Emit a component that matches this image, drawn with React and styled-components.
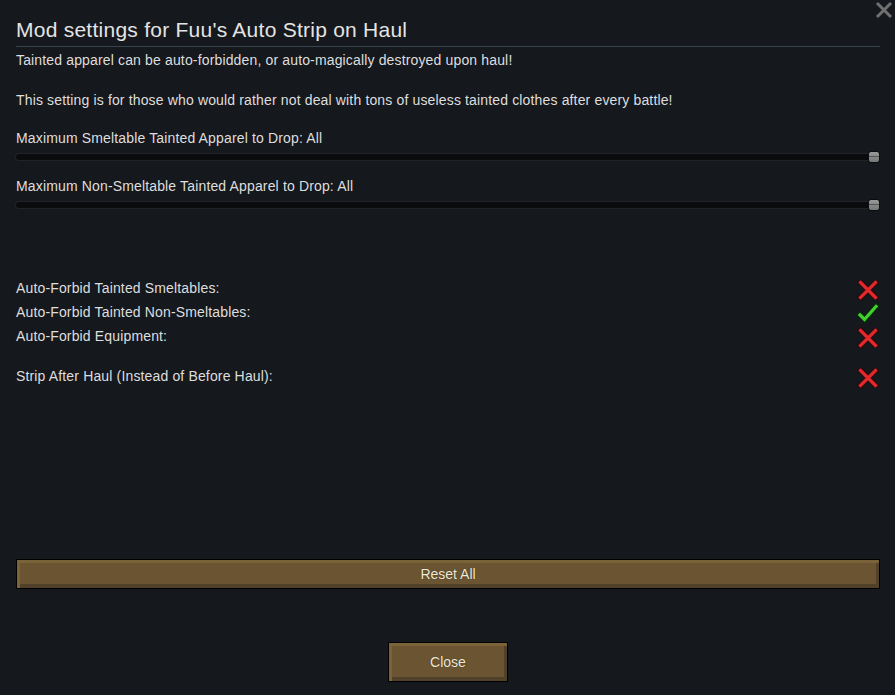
import React from 'react'
import styled, { createGlobalStyle } from 'styled-components'

const GlobalStyle = createGlobalStyle`
  html, body {
    margin:0;
    padding:0;
    background:#15181d;
  }
  body{
    font-family:"Liberation Sans", Arial, sans-serif;
    color:#dedede;
  }
`

const Window = styled.div`
  position:relative;
  width:895px;
  height:695px;
  box-sizing:border-box;
  padding:0 15px 13px 16px;
  display:flex;
  flex-direction:column;
  background:#15181d;
  overflow:hidden;
`

const CloseX = styled.svg`
  position:absolute;
  top:1px;
  right:2px;
  width:18px;
  height:18px;
`

const Title = styled.h1`
  margin:18px 0 0;
  padding-bottom:4px;
  font-size:21px;
  letter-spacing:0.25px;
  line-height:24px;
  font-weight:normal;
  color:#e4e4e4;
  border-bottom:1px solid #38454d;
`

const Text = styled.p`
  margin:${p => p.$top || 0}px 0 0;
  font-size:14px;
  letter-spacing:0.15px;
  line-height:20px;
  min-height:20px;
`

const SliderBlock = styled.div`
  margin-top:${p => p.$top}px;
  display:flex;
  flex-direction:column;
  gap:3px;
`

const Track = styled.div`
  position:relative;
  height:12px;
  display:flex;
  align-items:center;

  &::before{
    content:'';
    flex:1;
    height:6px;
    margin-right:4px;
    border-radius:3px;
    background:#0a0b0d;
    box-shadow:0 0 0 1px #202328;
  }
`

const Handle = styled.div`
  position:absolute;
  right:0;
  top:0;
  width:10px;
  height:10px;
  border:1px solid #0b0c0e;
  border-radius:3px;
  background:linear-gradient(#9a9a9a 0, #8a8a8a 40%, #555 40%, #555 55%, #858585 55%, #7a7a7a 100%);
`

const ToggleList = styled.div`
  margin-top:67px;
  display:flex;
  flex-direction:column;
`

const ToggleRow = styled.div`
  height:24px;
  margin-top:${p => p.$gap || 0}px;
  display:flex;
  justify-content:space-between;
  align-items:flex-start;
  font-size:14px;
  letter-spacing:0.15px;
  line-height:20px;
`

const Icon = styled.svg`
  width:24px;
  height:24px;
`

const Button = styled.button`
  box-sizing:border-box;
  border:1px solid #000;
  background:#6a5432;
  box-shadow:
    inset 3px 3px 0 #7b6339,
    inset -3px -4px 0 #52412a;
  color:#f1e9d6;
  font-family:"Liberation Sans", Arial, sans-serif;
  font-size:14px;
  text-shadow:0 0 1px rgba(0,0,0,.6);
  padding:0;
  cursor:pointer;
`

const ResetButton = styled(Button)`
  margin-top:auto;
  width:100%;
  height:30px;
`

const CloseButton = styled(Button)`
  margin-top:53px;
  align-self:center;
  width:120px;
  height:40px;
`

function Cross() {
  return (
    <Icon viewBox="0 0 24 24">
      <g strokeLinecap="square">
        <path d="M4.5 4.5 L19.5 19.5 M19.5 4.5 L4.5 19.5" stroke="#2a0c0c" strokeWidth="5.4" />
        <path d="M4.5 4.5 L19.5 19.5 M19.5 4.5 L4.5 19.5" stroke="#e3292b" strokeWidth="3.2" />
      </g>
    </Icon>
  )
}

function Check() {
  return (
    <Icon viewBox="0 0 24 24">
      <g fill="none" strokeLinecap="square" strokeLinejoin="miter">
        <path d="M4 13 L8.5 17.5 L20 4.5" stroke="#0c2a0a" strokeWidth="5.4" />
        <path d="M4 13 L8.5 17.5 L20 4.5" stroke="#3fd22a" strokeWidth="3.2" />
      </g>
    </Icon>
  )
}

const sliders = [
  'Maximum Smeltable Tainted Apparel to Drop: All',
  'Maximum Non-Smeltable Tainted Apparel to Drop: All',
]

const toggles = [
  { label: 'Auto-Forbid Tainted Smeltables:', on: false },
  { label: 'Auto-Forbid Tainted Non-Smeltables:', on: true },
  { label: 'Auto-Forbid Equipment:', on: false },
  { label: 'Strip After Haul (Instead of Before Haul):', on: false, gap: 16 },
]

export default function App() {
  return (
    <>
      <GlobalStyle />
      <Window>
        <CloseX viewBox="0 0 18 18">
          <path d="M2 2 L16 16 M16 2 L2 16" stroke="#707070" strokeWidth="3" />
        </CloseX>
        <Title>Mod settings for Fuu's Auto Strip on Haul</Title>
        <Text $top={3}>Tainted apparel can be auto-forbidden, or auto-magically destroyed upon haul!</Text>
        <Text />
        <Text>This setting is for those who would rather not deal with tons of useless tainted clothes after every battle!</Text>

        {sliders.map((label, i) => (
          <SliderBlock key={label} $top={i === 0 ? 18 : 13}>
            <Text>{label}</Text>
            <Track>
              <Handle />
            </Track>
          </SliderBlock>
        ))}

        <ToggleList>
          {toggles.map(t => (
            <ToggleRow key={t.label} $gap={t.gap}>
              <span>{t.label}</span>
              {t.on ? <Check /> : <Cross />}
            </ToggleRow>
          ))}
        </ToggleList>

        <ResetButton>Reset All</ResetButton>
        <CloseButton>Close</CloseButton>
      </Window>
    </>
  )
}
